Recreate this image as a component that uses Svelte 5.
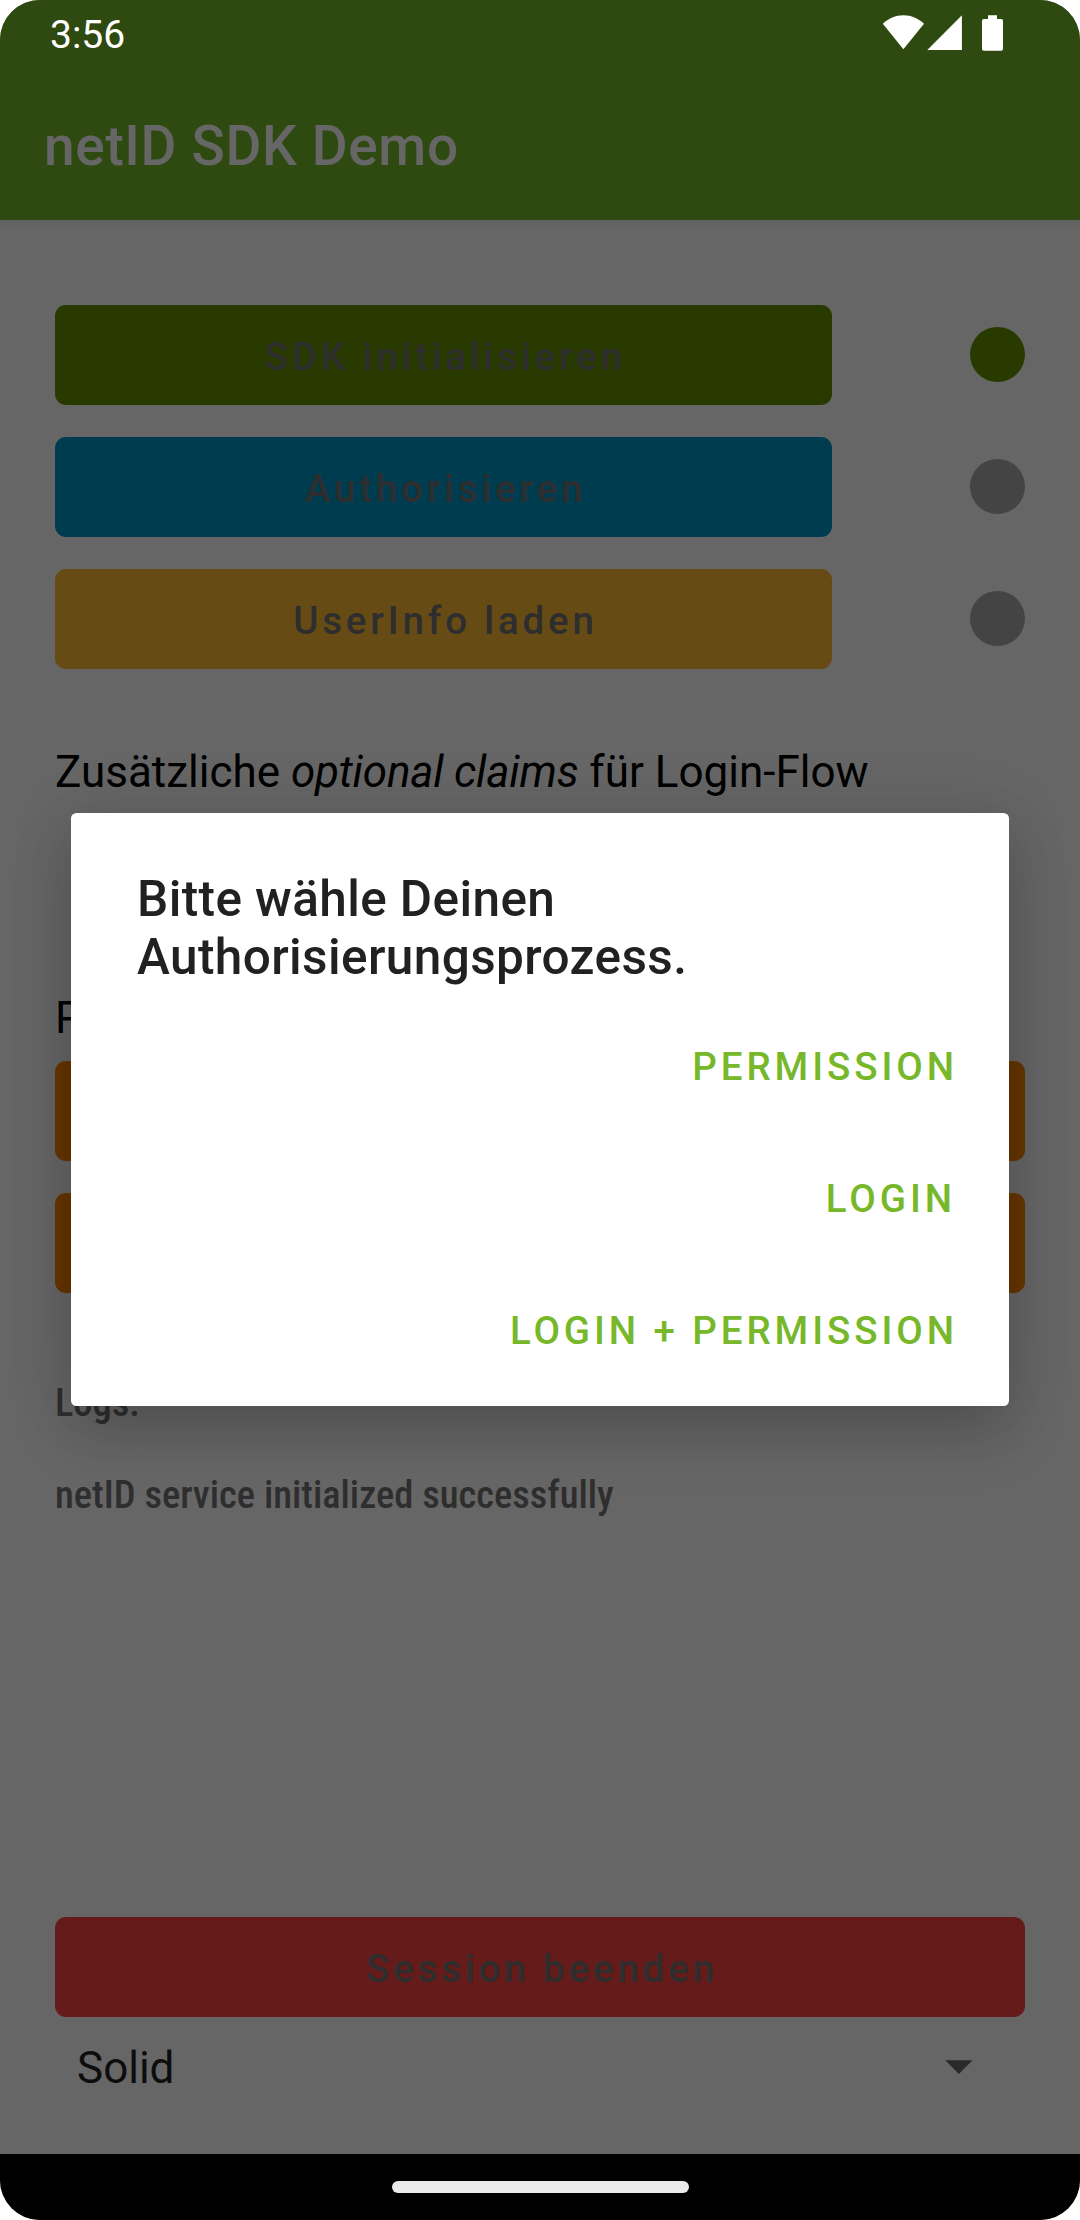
<script>
  const steps = [
    { label: 'SDK initialisieren', tone: 'green', done: true },
    { label: 'Authorisieren', tone: 'blue', done: false },
    { label: 'UserInfo laden', tone: 'amber', done: false }
  ];
  const choices = ['Permission', 'Login', 'Login + Permission'];
</script>

<div class="screen">
  <header>
    <div class="status">
      <span class="time">3:56</span>
      <svg class="icons" viewBox="0 0 122 38" width="122" height="38">
        <path d="M.8 9.7C6.500 4.400 13.500 1.200 21.400 1.200S36.300 4.400 42 9.700L21.400 35.300Z" />
        <path d="M45.300 36L79.900 1.300V36Z" />
        <path d="M106 1.200H115V5H119.200Q121 5 121 7V34.800Q121 36.700 119.200 36.700H101.800Q100 36.700 100 34.800V7Q100 5 101.800 5H106Z" />
      </svg>
    </div>
    <h1>netID SDK Demo</h1>
  </header>

  <main>
    <div class="steps">
      {#each steps as step}
        <div class="step">
          <button class="btn {step.tone}">{step.label}</button>
          <span class="dot" class:done={step.done}></span>
        </div>
      {/each}
    </div>

    <p class="claims">Zusätzliche <em>optional claims</em> für Login-Flow</p>
    <p class="flow">Permission-Flow</p>
    <div class="flow-buttons">
      <button class="btn orange" aria-label="Permission lesen"></button>
      <button class="btn orange" aria-label="Permission aktualisieren"></button>
    </div>

    <div class="logs">
      <p>Logs:</p>
      <p>netID service initialized successfully</p>
    </div>

    <div class="bottom">
      <button class="btn red">Session beenden</button>
      <div class="select">
        <span>Solid</span>
        <svg viewBox="0 0 28 14" width="28" height="14"><path d="M.3 .3H27.500L13.900 14Z" /></svg>
      </div>
    </div>
  </main>

  <footer><span class="handle"></span></footer>

  <div class="dialog" role="dialog">
    <h2>Bitte wähle Deinen<br />Authorisierungsprozess.</h2>
    <div class="choices">
      {#each choices as choice}
        <button>{choice}</button>
      {/each}
    </div>
  </div>
</div>

<style>
  :global(body) {
    margin: 0;
    background: #fff;
  }
  .screen {
    position: relative;
    display: flex;
    flex-direction: column;
    width: 1080px;
    height: 2220px;
    overflow: hidden;
    border-radius: 40px;
    background: #666;
    font-family: Roboto, sans-serif;
  }
  h1, h2, p {
    margin: 0;
  }
  button {
    border: 0;
    padding: 0;
    background: none;
    font: 500 38.5px/46px Roboto, sans-serif;
  }
  header {
    flex: none;
    height: 220px;
    background: #2f4a11;
    box-shadow: 0 3px 10px rgba(0, 0, 0, 0.08);
  }
  .status {
    display: flex;
    justify-content: space-between;
    height: 66px;
    box-sizing: border-box;
    padding: 12px 76px 0 50px;
    color: #fff;
  }
  .time {
    font-size: 39px;
    line-height: 46px;
  }
  .icons {
    margin-top: 2px;
    fill: #fff;
  }
  h1 {
    padding: 48px 44px 0;
    font-size: 55px;
    font-weight: 500;
    line-height: 64px;
    letter-spacing: 0.65px;
    color: #666;
  }
  main {
    flex: 1;
    display: flex;
    flex-direction: column;
    padding: 85px 55px 0;
  }
  .steps, .flow-buttons {
    display: flex;
    flex-direction: column;
    gap: 32px;
  }
  .step {
    display: flex;
    align-items: center;
    justify-content: space-between;
  }
  .step .btn {
    width: 777px;
  }
  .btn {
    flex: none;
    display: block;
    width: 100%;
    height: 100px;
    padding: 4px 0 0 4px;
    border-radius: 11px;
    color: #2e2e2e;
    letter-spacing: 3.84px;
  }
  .green { background: #293a00; }
  .blue { background: #003c50; }
  .amber { background: #664b14; }
  .orange { background: #663600; }
  .red { background: #651b1a; }
  .dot {
    width: 55px;
    height: 55px;
    margin-bottom: 1px;
    border-radius: 50%;
    background: #444;
  }
  .dot.done { background: #293a00; }
  .claims, .flow {
    font-size: 44px;
    line-height: 52px;
    color: #000;
  }
  .claims { margin-top: 77px; }
  .claims em { letter-spacing: -0.22px; }
  .flow { margin: 194px 0 17px; }
  .logs {
    display: flex;
    flex-direction: column;
    gap: 46px;
    margin-top: 87px;
    font-size: 38.5px;
    font-weight: 500;
    font-stretch: 75%;
    line-height: 46px;
    color: #2e2e2e;
  }
  .bottom {
    margin-top: auto;
    height: 237px;
  }
  .select {
    display: flex;
    justify-content: space-between;
    align-items: center;
    height: 52px;
    margin-top: 25px;
    padding: 0 52px 0 22px;
    font-size: 44px;
    line-height: 52px;
    color: #0d0d0d;
  }
  .select svg {
    margin-bottom: 2px;
    fill: #2a2a2a;
  }
  footer {
    flex: none;
    display: flex;
    justify-content: center;
    height: 39px;
    padding-top: 27px;
    background: #000;
  }
  .handle {
    width: 297px;
    height: 12px;
    border-radius: 6px;
    background: #ebebeb;
  }
  .dialog {
    position: absolute;
    left: 71px;
    top: 813px;
    width: 938px;
    height: 593px;
    box-sizing: border-box;
    padding: 57px 51px 0 66px;
    border-radius: 5.5px;
    background: #fff;
    box-shadow: 0 28px 60px rgba(0, 0, 0, 0.17), 0 0 66px rgba(0, 0, 0, 0.1);
  }
  h2 {
    font-size: 49.5px;
    font-weight: 500;
    line-height: 58px;
    letter-spacing: 0.4px;
    color: #212121;
  }
  .choices {
    display: flex;
    flex-direction: column;
    align-items: flex-end;
    gap: 86px;
    margin-top: 58px;
  }
  .choices button {
    color: #76b82a;
    letter-spacing: 3.92px;
    text-transform: uppercase;
  }
  .choices button:nth-child(2) {
    margin-right: 2px;
  }
</style>
